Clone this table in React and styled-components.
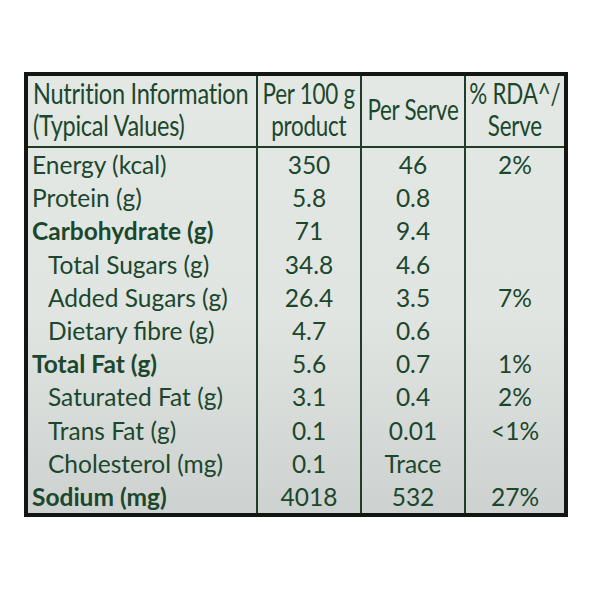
import React from 'react';
import styled, { createGlobalStyle } from 'styled-components';

const GlobalStyle = createGlobalStyle`
  html, body {
    margin: 0;
    padding: 0;
    background: #ffffff;
  }
  body {
    font-family: Lato, "Liberation Sans", sans-serif;
  }
`;

const Page = styled.div`
  width: 600px;
  height: 600px;
  padding: 72px 0 0 24px;
  box-sizing: border-box;
`;

const Table = styled.table`
  width: 544px;
  table-layout: fixed;
  border-collapse: separate;
  border-spacing: 0;
  border: 4px solid #141614;
  background: linear-gradient(180deg, #e4e8e5 0%, #e1e5e2 55%, #cdd1cf 100%);
  color: #1b472c;
  font-family: Lato, "Liberation Sans", sans-serif;
`;

const Col = styled.col`
  width: ${(p) => p.$w}px;
`;

const Head = styled.th`
  height: 66px;
  padding: 0 0 4px ${(p) => (p.$left ? '5px' : '0')};
  font-size: 28px;
  font-weight: 400;
  line-height: 32px;
  border-bottom: 2px solid #1f3d28;
  border-left: ${(p) => (p.$left ? 'none' : '2px solid #1f3d28')};
  vertical-align: middle;
  white-space: nowrap;
`;

const HeadInner = styled.div`
  display: flex;
  justify-content: ${(p) => (p.$left ? 'flex-start' : 'center')};
  text-align: ${(p) => (p.$left ? 'left' : 'center')};
`;

// header lettering is tall and condensed
const HeadText = styled.span`
  flex-shrink: 0;
  transform: scaleX(${(p) => p.$sx || 0.84});
  transform-origin: ${(p) => (p.$left ? 'left center' : 'center center')};
  letter-spacing: -0.3px;
`;

const Label = styled.td`
  height: 33.2px;
  padding: 0 0 0 ${(p) => (p.$sub ? '20px' : '4px')};
  font-size: 24.5px;
  line-height: 33px;
  font-weight: ${(p) => (p.$bold ? 700 : 400)};
  white-space: nowrap;
`;

const Value = styled.td`
  padding: 0;
  font-size: 24.5px;
  line-height: 33px;
  text-align: center;
  border-left: 2px solid #1f3d28;
  white-space: nowrap;
`;

const rows = [
  { label: 'Energy (kcal)', per100: '350', serve: '46', rda: '2%' },
  { label: 'Protein (g)', per100: '5.8', serve: '0.8', rda: '' },
  { label: 'Carbohydrate (g)', per100: '71', serve: '9.4', rda: '', bold: true },
  { label: 'Total Sugars (g)', per100: '34.8', serve: '4.6', rda: '', sub: true },
  { label: 'Added Sugars (g)', per100: '26.4', serve: '3.5', rda: '7%', sub: true },
  { label: 'Dietary fibre (g)', per100: '4.7', serve: '0.6', rda: '', sub: true },
  { label: 'Total Fat (g)', per100: '5.6', serve: '0.7', rda: '1%', bold: true },
  { label: 'Saturated Fat (g)', per100: '3.1', serve: '0.4', rda: '2%', sub: true },
  { label: 'Trans Fat (g)', per100: '0.1', serve: '0.01', rda: '<1%', sub: true },
  { label: 'Cholesterol (mg)', per100: '0.1', serve: 'Trace', rda: '', sub: true },
  { label: 'Sodium (mg)', per100: '4018', serve: '532', rda: '27%', bold: true },
];

const App = () => {
  return (
    <>
      <GlobalStyle />
      <Page>
        <Table>
          <colgroup>
            <Col $w={228} />
            <Col $w={104} />
            <Col $w={104} />
            <Col $w={100} />
          </colgroup>
          <thead>
            <tr>
              <Head $left>
                <HeadInner $left>
                  <HeadText $left>
                    Nutrition Information
                    <br />
                    (Typical Values)
                  </HeadText>
                </HeadInner>
              </Head>
              <Head>
                <HeadInner>
                  <HeadText $sx={0.8}>
                    Per 100 g
                    <br />
                    product
                  </HeadText>
                </HeadInner>
              </Head>
              <Head>
                <HeadInner>
                  <HeadText $sx={0.8}>Per Serve</HeadText>
                </HeadInner>
              </Head>
              <Head>
                <HeadInner>
                  <HeadText $sx={0.8}>
                    % RDA^/
                    <br />
                    Serve
                  </HeadText>
                </HeadInner>
              </Head>
            </tr>
          </thead>
          <tbody>
            {rows.map((r) => (
              <tr key={r.label}>
                <Label $bold={r.bold} $sub={r.sub}>
                  {r.label}
                </Label>
                <Value>{r.per100}</Value>
                <Value>{r.serve}</Value>
                <Value>{r.rda}</Value>
              </tr>
            ))}
          </tbody>
        </Table>
      </Page>
    </>
  );
};

export default App;
